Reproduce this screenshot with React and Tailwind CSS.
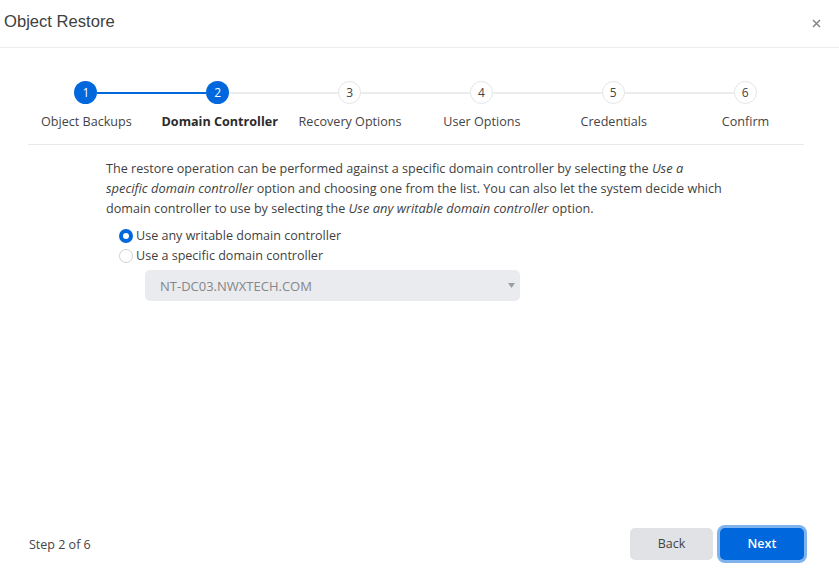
const steps = ["Object Backups", "Domain Controller", "Recovery Options", "User Options", "Credentials", "Confirm"];

function Step({ n, label, index }) {
  const done = n <= 2;
  const active = n === 2;
  return (
    <div className="flex flex-col items-center">
      <div className="flex w-full items-center">
        <div className={`h-[2px] flex-1 ${index === 0 ? "bg-transparent" : done ? "bg-[#0067dc]" : "bg-[#eceded]"}`} />
        <div className={`flex h-[23px] w-[23px] shrink-0 items-center justify-center rounded-full text-[12px] ${done ? "bg-[#0067dc] text-white" : "border border-[#e3e5e7] bg-white text-[#444]"}`}>
          {n}
        </div>
        <div className={`h-[2px] flex-1 ${index === 5 ? "bg-transparent" : n === 1 ? "bg-[#0067dc]" : "bg-[#eceded]"}`} />
      </div>
      <div className={`mt-[9px] whitespace-nowrap text-[12.6px] leading-[18px] ${active ? "pl-[4px] font-bold text-[#2b2b2b]" : "pl-px text-[#444]"}`}>{label}</div>
    </div>
  );
}

export default function App() {
  return (
    <div className="flex h-[588px] w-[839px] flex-col bg-white font-['Open_Sans',sans-serif] text-[#3a3a3a]">
      <header className="flex h-[48px] shrink-0 items-center justify-between border-b border-[#ececec] pb-[3px] pl-1 pr-[18px]">
        <h1 className="font-['Liberation_Sans',sans-serif] text-[16.6px] text-[#404040]">Object Restore</h1>
        <svg width="9" height="9" viewBox="0 0 9 9" className="mt-[2px]" stroke="#858585" strokeWidth="1.5"><path d="M1 1l7 7M8 1l-7 7" /></svg>
      </header>

      <div className="ml-5 mt-[33px] grid w-[791px] grid-cols-6">
        {steps.map((s, i) => <Step key={s} n={i + 1} label={s} index={i} />)}
      </div>
      <div className="ml-7 mt-[13px] h-px w-[776px] bg-[#e9e9e9]" />

      <div className="ml-[106px] mt-[14px] w-[660px] text-[12.6px] leading-[20px] text-[#3f3f3f]">
        <p>
          The restore operation can be performed against a specific domain controller by selecting the <em className="text-[12.9px] leading-none">Use a</em>
          <br />
          <em className="text-[12.9px] leading-none">specific domain controller</em> option and choosing one from the list. You can also let the system decide which
          <br />
          domain controller to use by selecting the <em className="text-[12.9px] leading-none">Use any writable domain controller</em> option.
        </p>
        <div className="ml-[13px] mt-[7px] flex items-center gap-[3px]">
          <span className="h-[14px] w-[14px] rounded-full border-[4px] border-[#0067dc] bg-white" />
          <span className="text-[12.55px]">Use any writable domain controller</span>
        </div>
        <div className="ml-[13px] flex items-center gap-[3px]">
          <span className="h-[14px] w-[14px] rounded-full border border-[#cfd2d6] bg-white" />
          <span className="text-[12.55px]">Use a specific domain controller</span>
        </div>
        <div className="ml-[39px] mt-[4px] flex h-[31px] w-[375px] items-center justify-between rounded-[5px] bg-[#e9ebee] pl-[15px] pr-[5px] text-[13px] text-[#85878a]">
          <span>NT-DC03.NWXTECH.COM</span>
          <svg width="7" height="5" viewBox="0 0 7 5" fill="#9a9ea3"><path d="M0 0h7L3.5 5z" /></svg>
        </div>
      </div>

      <footer className="mx-[29px] mb-[28px] mt-auto flex items-center justify-between pr-[6px] text-[12.5px]">
        <span className="relative top-px text-[#444]">Step 2 of 6</span>
        <div className="flex items-center gap-[7px]">
          <button className="h-[32px] w-[83px] rounded-[5px] bg-[#e0e2e5] text-[#444]">Back</button>
          <button className="h-[32px] w-[84px] rounded-[5px] bg-[#0067dc] font-semibold text-white ring-[3px] ring-[#7fb3ee]">Next</button>
        </div>
      </footer>
    </div>
  );
}
